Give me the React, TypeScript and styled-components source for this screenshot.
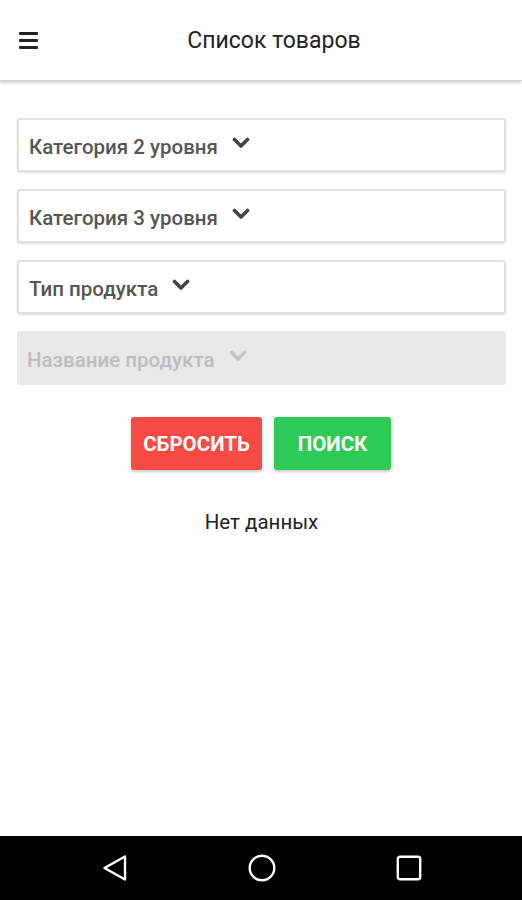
import React from 'react';
import styled, { createGlobalStyle } from 'styled-components';

const GlobalStyle = createGlobalStyle`
  html, body {
    margin: 0;
    padding: 0;
    background: #fff;
    font-family: Roboto, 'Noto Sans', sans-serif;
  }
`;

const Screen = styled.div`
  width: 522px;
  height: 900px;
  display: flex;
  flex-direction: column;
  background: #fff;
`;

const Header = styled.header`
  height: 80px;
  flex-shrink: 0;
  display: flex;
  align-items: center;
  background: #fff;
  border-bottom: 1px solid #d6d6d6;
  box-shadow: 0 2px 3px rgba(0, 0, 0, 0.18);
  z-index: 1;
`;

const MenuButton = styled.div`
  width: 19px;
  margin-left: 19px;
  margin-top: 1px;
  display: flex;
  flex-direction: column;
  gap: 4px;
`;

const MenuLine = styled.span`
  display: block;
  height: 3px;
  background: #222;
  border-radius: 1px;
`;

const Title = styled.h1`
  margin: 0 12px 0 0;
  flex: 1;
  text-align: center;
  font-size: 23px;
  font-weight: 400;
  color: #222;
`;

const Content = styled.main`
  flex: 1;
  display: flex;
  flex-direction: column;
  padding: 37px 16px 0 17px;
`;

const Fields = styled.div`
  display: flex;
  flex-direction: column;
  gap: 17px;
`;

const Select = styled.div<{ $disabled?: boolean }>`
  height: 54px;
  box-sizing: border-box;
  display: flex;
  align-items: center;
  gap: 14px;
  padding: 4px 10px 0;
  border-radius: 3px;
  background: ${({ $disabled }) => ($disabled ? '#e8e8e8' : '#fff')};
  border: ${({ $disabled }) => ($disabled ? 'none' : '2px solid #e0e0e0')};
  box-shadow: ${({ $disabled }) =>
    $disabled ? 'none' : '0 1px 2px rgba(0, 0, 0, 0.12)'};
  color: ${({ $disabled }) => ($disabled ? '#bdbdbd' : '#555')};
  font-size: 20.5px;
  font-weight: 500;
`;

const Chevron = styled.svg<{ $disabled?: boolean }>`
  width: 18px;
  height: 12px;
  margin-top: -8px;
  color: ${({ $disabled }) => ($disabled ? '#c4c4c4' : '#444')};
`;

const Actions = styled.div`
  display: flex;
  justify-content: center;
  gap: 12px;
  margin-top: 32px;
  padding-right: 1px;
`;

const Button = styled.button<{ $tone: 'danger' | 'success' }>`
  height: 53px;
  border: none;
  border-radius: 3px;
  padding: 0 8px;
  background: ${({ $tone }) => ($tone === 'danger' ? '#f64b45' : '#2dcb55')};
  color: #fff;
  font-family: Roboto, 'Noto Sans', sans-serif;
  font-size: 20.5px;
  font-weight: 700;
  box-shadow: 0 2px 3px rgba(0, 0, 0, 0.2);
  min-width: ${({ $tone }) => ($tone === 'danger' ? '131px' : '117px')};
`;

const Empty = styled.p`
  margin: 40px 0 0;
  text-align: center;
  font-size: 20.5px;
  color: #222;
`;

const NavBar = styled.nav`
  height: 64px;
  flex-shrink: 0;
  background: #000;
  display: flex;
  align-items: center;
  justify-content: center;
  gap: 119px;
  padding-left: 2px;
`;

const NavIcon = styled.svg`
  width: 28px;
  height: 28px;
`;

const ChevronIcon = ({ disabled }: { disabled?: boolean }) => (
  <Chevron $disabled={disabled} viewBox="0 0 18 12" fill="none">
    <polyline
      points="2.5,2.5 9,9 15.5,2.5"
      stroke="currentColor"
      strokeWidth="3.6"
      strokeLinecap="round"
      strokeLinejoin="round"
    />
  </Chevron>
);

const fields = [
  { label: 'Категория 2 уровня' },
  { label: 'Категория 3 уровня' },
  { label: 'Тип продукта' },
  { label: 'Название продукта', disabled: true },
];

export default function App() {
  return (
    <>
      <GlobalStyle />
      <Screen>
        <Header>
          <MenuButton>
            <MenuLine />
            <MenuLine />
            <MenuLine />
          </MenuButton>
          <Title>Список товаров</Title>
        </Header>
        <Content>
          <Fields>
            {fields.map((f) => (
              <Select key={f.label} $disabled={f.disabled}>
                <span>{f.label}</span>
                <ChevronIcon disabled={f.disabled} />
              </Select>
            ))}
          </Fields>
          <Actions>
            <Button $tone="danger">СБРОСИТЬ</Button>
            <Button $tone="success">ПОИСК</Button>
          </Actions>
          <Empty>Нет данных</Empty>
        </Content>
        <NavBar>
          <NavIcon viewBox="0 0 28 28" fill="none">
            <path
              d="M24 2.5 L3.5 14 L24 25.5 Z"
              stroke="#fff"
              strokeWidth="2.4"
              strokeLinejoin="round"
            />
          </NavIcon>
          <NavIcon viewBox="0 0 28 28" fill="none">
            <circle cx="14" cy="14" r="12.3" stroke="#fff" strokeWidth="2.4" />
          </NavIcon>
          <NavIcon viewBox="0 0 28 28" fill="none">
            <rect x="2.8" y="2.8" width="22.4" height="22.4" rx="2.2" stroke="#fff" strokeWidth="2.4" />
          </NavIcon>
        </NavBar>
      </Screen>
    </>
  );
}
